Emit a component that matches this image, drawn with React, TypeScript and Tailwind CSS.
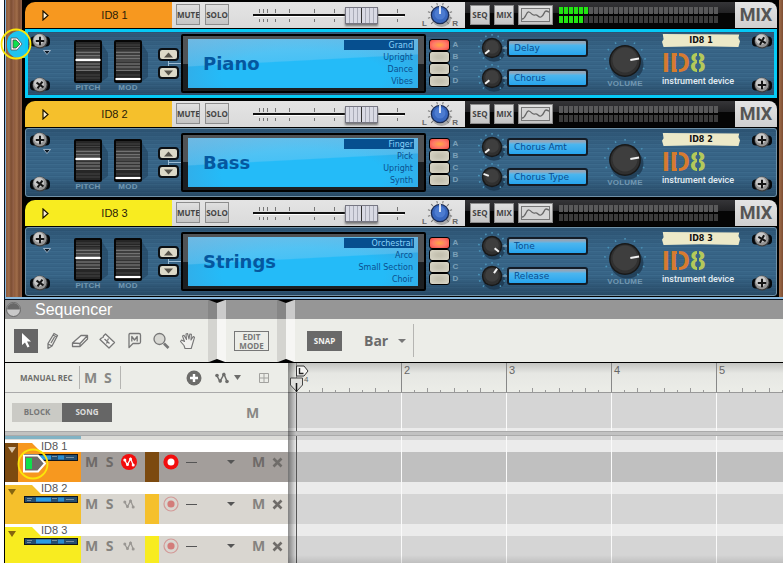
import { Fragment } from "react";

const units = [
  {
    name: "ID8 1",
    patch: "Piano",
    color: "bg-[#f7981f]",
    sounds: ["Grand", "Upright", "Dance", "Vibes"],
    params: [
      { name: "Delay", angle: -130 },
      { name: "Chorus", angle: -130 },
    ],
    level: [6, 5],
    selected: true,
  },
  {
    name: "ID8 2",
    patch: "Bass",
    color: "bg-[#f5c02c]",
    sounds: ["Finger", "Pick", "Upright", "Synth"],
    params: [
      { name: "Chorus Amt", angle: -130 },
      { name: "Chorus Type", angle: -70 },
    ],
    level: [0, 0],
    selected: false,
  },
  {
    name: "ID8 3",
    patch: "Strings",
    color: "bg-[#f8ec20]",
    sounds: ["Orchestral", "Arco", "Small Section", "Choir"],
    params: [
      { name: "Tone", angle: 130 },
      { name: "Release", angle: 35 },
    ],
    level: [0, 0],
    selected: false,
  },
];

const segments = Array.from({ length: 32 }, (_, i) => i);
const bars = [1, 2, 3, 4, 5];

function Ring({ size }: { size: number }) {
  return (
    <g fill="#4a93b8">
      {[-140, -112, -84, -56, -28, 0, 28, 56, 84, 112, 140].map((a) => (
        <rect key={a} x="-0.7" y={-size} width="1.5" height="1.7" transform={`rotate(${a})`} />
      ))}
    </g>
  );
}

function Knob({ label, angle, big }: { label: string; angle: number; big?: boolean }) {
  const r = big ? 15.5 : 9.8;
  return (
    <label className="relative block">
      <svg
        className={big ? "block size-11" : "block h-[30px] w-7 overflow-visible"}
        viewBox={big ? "-22 -22 44 44" : "-14 -15 28 30"}
      >
        <ellipse cx="2" cy="4" rx={r + 1} ry={r} fill="#152c40" opacity="0.6" />
        <Ring size={big ? 21 : 14} />
        {!big && <path d="M10.500 0H15" stroke="#9dbdd4" />}
        <circle r={r + 0.4} fill="#181818" />
        <circle r={r - 1} fill="#303030" />
        <circle cy="-1" r={r - 3} fill="#3e3e3e" />
        <path d={`M0 ${-r * 0.35}V${-r * 0.92}`} stroke="#f2f2f2" strokeWidth="2" transform={`rotate(${angle})`} />
      </svg>
      <input type="range" aria-label={label} className="absolute inset-0 w-full opacity-0" />
    </label>
  );
}

function Screw({ turn }: { turn: number }) {
  return (
    <svg className="block h-4 w-5" viewBox="-10 -8 20 16">
      <rect x="-10" y="-4.500" width="20" height="10" rx="4" fill="#05080b" />
      <circle r="7.600" fill="#3f3f3f" />
      <circle cx="-0.3" cy="-0.5" r="6.800" fill="#959595" />
      <circle cx="-1" cy="-1.500" r="5" fill="#c9c9c9" />
      <path d="M-4.200 0H4.200M0-4.200V4.200" stroke="#151515" strokeWidth="2" transform={`rotate(${turn})`} />
    </svg>
  );
}

function Wheel({ label, mark }: { label: string; mark: number }) {
  return (
    <label className="relative flex w-7 flex-col items-center">
      <svg className="block h-[43px] w-7 overflow-visible" viewBox="0 0 28 43">
        <path d="M27 2l7 11v24l-7 5z" fill="#1b3a54" opacity="0.5" />
        <rect width="28" height="43" rx="2" fill="#060606" />
        <rect x="2" y="2" width="24" height="39" fill="#262626" />
        <path d="M2 5h24M2 7.500h24M2 10h24M2 35h24M2 38h24" stroke="#444" />
        <rect x="2" y="11" width="24" height="20" fill="#484848" />
        <path d="M2 12.500h24M2 15.500h24M2 18.500h24M2 24h24M2 27h24M2 30.500h24" stroke="#727272" />
        <path d="M2 14h24M2 22.500h24M2 25.500h24M2 29h24" stroke="#333" />
        <path d={`M1.500 ${mark}h25`} stroke="#fff" strokeWidth="2" />
      </svg>
      <span className="mt-px text-[8px] leading-[8px] font-bold tracking-wide text-[#7298b2]">{label}</span>
      <input type="range" aria-label={label} className="absolute inset-0 w-full opacity-0" />
    </label>
  );
}

function PanKnob() {
  return (
    <label className="relative flex h-full w-9 items-start justify-center">
      <svg className="mt-px block h-[25px] w-7" viewBox="-14 -12 28 25">
        <g stroke="#777" strokeWidth="1">
          {[-135, -105, -75, -45, -15, 15, 45, 75, 105, 135].map((a) => (
            <path key={a} d="M0-10V-12.500" transform={`rotate(${a})`} />
          ))}
        </g>
        <ellipse cx="1.500" cy="3.500" rx="9.500" ry="8.500" fill="#777" opacity="0.5" />
        <circle r="9.300" fill="#1c2c52" />
        <circle r="8" fill="#3866bd" />
        <circle cy="-1" r="5.500" fill="#4c7bd0" />
        <path d="M0-9V-1" stroke="#fff" strokeWidth="1.600" />
      </svg>
      <span className="absolute bottom-0 left-0 text-[8px] leading-[8px] font-bold text-[#666]">L</span>
      <span className="absolute right-0 bottom-0 text-[8px] leading-[8px] font-bold text-[#666]">R</span>
      <input type="range" aria-label="Pan" className="absolute inset-0 w-full opacity-0" />
    </label>
  );
}

function MixStrip({ unit }: { unit: (typeof units)[number] }) {
  const small =
    "border border-[#8d8d8d] bg-linear-to-b from-[#e0e0e0] to-[#c4c4c4] font-['Open_Sans',sans-serif] text-[8px] leading-none font-bold text-[#444]";
  return (
    <div className="flex h-[26px] bg-black">
      <div className={`flex w-[147px] shrink-0 items-center rounded-tl-[10px] ${unit.color}`}>
        <svg className="ml-[17px] h-[11px] w-[7px]" viewBox="0 0 7 11">
          <path d="M1 1L6 5.500L1 10z" fill="#fff3d8" stroke="#1b1300" strokeWidth="1.200" />
        </svg>
        <span className="flex-1 pr-4 pl-6 text-center text-[11px] text-[#2b2108]">{unit.name}</span>
      </div>
      <div className="flex w-[293px] shrink-0 items-start bg-linear-to-b from-[#e4e4e4] to-[#dadada] pl-1">
        <button className={`mt-[2px] h-[21px] w-6 ${small}`}>MUTE</button>
        <button className={`mt-[2px] ml-[5px] h-[21px] w-6 ${small}`}>SOLO</button>
        <div className="relative ml-6 h-[26px] w-[152px]">
          <svg className="block h-[26px] w-[152px]" viewBox="0 0 152 26">
            <path d="M1 13.500h150" stroke="#fff" strokeWidth="3" />
            <path d="M0 13h152" stroke="#111" strokeWidth="2" />
            {[6, 10, 14, 22, 36, 61, 81, 144].map((x) => (
              <path key={x} d={`M${x + 0.5} 7v4M${x + 0.5} 17v3`} stroke="#777" />
            ))}
          </svg>
          <input
            type="range"
            aria-label="Level"
            defaultValue={77}
            className="absolute inset-0 m-0 h-[26px] w-full appearance-none bg-transparent [&::-webkit-slider-thumb]:h-[17px] [&::-webkit-slider-thumb]:w-[33px] [&::-webkit-slider-thumb]:appearance-none [&::-webkit-slider-thumb]:border [&::-webkit-slider-thumb]:border-[#777783] [&::-webkit-slider-thumb]:bg-[linear-gradient(90deg,transparent_15px,#333_15px,#333_16px,transparent_16px),repeating-linear-gradient(90deg,#d9dae4_0px,#d9dae4_3px,#aaacb8_3px,#aaacb8_4px)] [&::-webkit-slider-thumb]:shadow-[0_2px_2px_#777]"
          />
        </div>
        <div className="ml-[17px] h-full">
          <PanKnob />
        </div>
      </div>
      <div className="flex min-w-0 flex-1 items-start bg-[linear-gradient(180deg,#353538_0px,#222224_11px,#050505_11px)] pl-[5px]">
        <button className={`mt-[3px] h-5 w-5 ${small}`}>SEQ</button>
        <button className={`mt-[3px] ml-1 h-5 w-5 ${small}`}>MIX</button>
        <button aria-label="Show insert" className={`mt-[3px] ml-1 flex h-5 w-[35px] items-center justify-center ${small}`}>
          <svg className="h-[14px] w-[29px] shrink-0" viewBox="0 0 29 14">
            <rect x="0.5" y="0.5" width="28" height="13" fill="#d5d5d5" stroke="#777" />
            <path
              d="M1 11C5 11 5 3 8 4s3 4 6 3 3 3 6 2 3-6 5-6 2 1 3 1"
              fill="none"
              stroke="#666"
              strokeWidth="1.300"
            />
          </svg>
        </button>
        <div className="mt-[5px] ml-[6px] flex flex-col gap-[2px]">
          {unit.level.map((lit, row) => (
            <div key={row} className="flex gap-px">
              {segments.map((i) => (
                <i
                  key={i}
                  className={`h-[7px] w-1 ${i < lit ? "bg-[#22e612]" : row === 0 ? "bg-[#59595a]" : "bg-[#3b3b3b]"}`}
                />
              ))}
            </div>
          ))}
        </div>
      </div>
      <button className="flex h-[26px] w-[42px] shrink-0 items-center justify-center rounded-tr-[8px] bg-linear-to-b from-[#e4e4e4] to-[#cfcfcf] font-['Roboto',sans-serif] text-[18px] leading-none font-bold text-[#555]">
        MIX
      </button>
    </div>
  );
}

function Device({ unit }: { unit: (typeof units)[number] }) {
  return (
    <div
      className={`mt-px flex h-[69px] items-start bg-[linear-gradient(180deg,rgba(25,50,75,0.35),transparent_30%,transparent_70%,rgba(20,40,60,0.45)),repeating-linear-gradient(180deg,#3c6a8c_0px,#3c6a8c_1px,#376486_1px,#376486_3px,#346082_3px,#346082_4px)] ${
        unit.selected ? "shadow-[inset_0_0_0_3px_#06caf6]" : "rounded-[3px] shadow-[inset_0_0_0_1px_#7192a8]"
      }`}
    >
      <div className="ml-[5px] flex h-16 w-[21px] flex-col pt-1">
        <Screw turn={0} />
        <svg className="mt-px h-[5px] w-2 self-end" viewBox="0 0 8 5">
          <path d="M0.500 0.500h7L4 4.500z" fill="#0b1824" stroke="#bcd" strokeWidth="0.800" />
        </svg>
        <div className="mt-auto">
          <Screw turn={35} />
        </div>
      </div>
      <div className="mt-[11px] ml-[23px] flex gap-3">
        <Wheel label="PITCH" mark={20} />
        <Wheel label="MOD" mark={39} />
      </div>
      <div className="mt-[19px] ml-4 flex w-[23px] flex-col">
        <button
          aria-label="Previous patch"
          className="flex h-[13px] w-[21px] items-center justify-center rounded-[4px] border-2 border-[#0b0f13] bg-[#dcd9c8]"
        >
          <svg className="h-2 w-[13px] shrink-0" viewBox="0 0 13 8">
            <path d="M2 6.500L6.500 1.500L11 6.500z" fill="#56534a" />
          </svg>
        </button>
        <svg className="h-[5px] w-[23px]" viewBox="0 0 23 5">
          <path d="M10.500 0v5M10.500 2.500H23" stroke="#9dbdd4" fill="none" />
        </svg>
        <button
          aria-label="Next patch"
          className="flex h-[13px] w-[21px] items-center justify-center rounded-[4px] border-2 border-[#0b0f13] bg-[#dcd9c8]"
        >
          <svg className="h-2 w-[13px] shrink-0" viewBox="0 0 13 8">
            <path d="M2 1.500L6.500 6.500L11 1.500z" fill="#56534a" />
          </svg>
        </button>
      </div>
      <div className="mt-[5px] h-[59px] w-[245px] shrink-0 rounded-[2px] border-2 border-black bg-linear-to-b from-[#505356] from-50% to-[#1c1f22] to-50% pt-[3px] pr-[6px] pb-[3px] pl-[5px]">
        <div className="flex h-full items-center justify-between bg-[linear-gradient(177deg,rgba(150,205,235,0.55)_0%,rgba(140,205,240,0.35)_44%,transparent_46%),radial-gradient(ellipse_at_50%_75%,#24bbf8_50%,#3f9fd8)] pl-[15px]">
          <span className="font-['DejaVu_Sans',sans-serif] text-[18px] font-bold text-[#05579f]">{unit.patch}</span>
          <ul className="mr-1 w-[70px] self-start pt-px text-right font-['DejaVu_Sans',sans-serif] text-[8px] text-[#0b4f8f]">
            {unit.sounds.map((sound, i) => (
              <li
                key={sound}
                className={`h-3 pr-px leading-[11px] whitespace-nowrap ${i === 0 ? "border-b-2 border-transparent bg-[#064f8f] bg-clip-padding text-[#8bd3fa]" : ""}`}
              >
                {sound}
              </li>
            ))}
          </ul>
        </div>
      </div>
      <div className="mt-[10px] ml-[3px] grid grid-cols-[21px_7px] gap-x-[2px]">
        {["A", "B", "C", "D"].map((letter, i) => (
          <Fragment key={letter}>
            <button
              aria-label={`Sound ${letter}`}
              className={`h-3 w-[21px] rounded-[3px] border border-black ${i === 0 ? "bg-[radial-gradient(#ffa04a_10%,#ff7a6a_50%,#f4463c)]" : "bg-[radial-gradient(#c4c1b0_20%,#dad7c8)]"}`}
            />
            <span className="text-center text-[8px] leading-3 font-bold text-[#7ba0b8]">{letter}</span>
          </Fragment>
        ))}
      </div>
      <div className="mt-1 ml-[19px] flex flex-col">
        {unit.params.map((param) => (
          <div key={param.name} className="flex h-[30px] items-center gap-px">
            <Knob label={param.name} angle={param.angle} />
            <div className="h-[18px] w-[81px] rounded-[3px] border-2 border-[#141c26] bg-linear-to-b from-[#8fa6ba] from-12% via-[#4cb6ee] via-30% to-[#25a5ee] pl-[5px] font-['DejaVu_Sans',sans-serif] text-[9px] leading-[14px] whitespace-nowrap text-[#084d90]">
              {param.name}
            </div>
          </div>
        ))}
      </div>
      <div className="mt-[10px] ml-[15px] flex flex-col items-center">
        <Knob label="Volume" angle={80} big />
        <span className="-mt-[3px] text-[8px] leading-[8px] font-bold tracking-wide text-[#7298b2]">VOLUME</span>
      </div>
      <div className="mt-[5px] ml-[15px] w-[78px]">
        <div className="h-[13px] bg-[#ece9c8] text-center font-['DejaVu_Sans',sans-serif] text-[8px] leading-[13px] font-bold text-[#111] [clip-path:polygon(1%_0,99%_4%,98%_30%,100%_55%,98%_100%,50%_94%,2%_100%,0_60%,2%_40%)]">
          {unit.name}
        </div>
        <div className="relative mt-1 w-max font-['Liberation_Sans',sans-serif] text-[28px] leading-[23px] font-bold text-[#d67b30]">
          ID<span className="text-[#b4c95a]">8</span>
          <span className="absolute top-0 right-[7px] h-full w-[2px] bg-[#376486]" />
          <span className="absolute top-0 left-[15px] h-full w-[2px] bg-[#376486]" />
        </div>
        <div className="mt-[2px] font-['Roboto',sans-serif] text-[9px] leading-[10px] font-medium whitespace-nowrap text-[#e4edf3]">
          instrument device
        </div>
      </div>
      <div className="mr-[5px] ml-auto flex h-16 flex-col justify-between pt-1">
        <Screw turn={unit.name === "ID8 2" ? 0 : 30} />
        <Screw turn={0} />
      </div>
    </div>
  );
}

function Pin({ className }: { className: string }) {
  return (
    <svg className={className} viewBox="0 0 32 32">
      <circle cx="16" cy="16" r="14.500" fill="none" stroke="#fbe50a" strokeWidth="1.800" />
    </svg>
  );
}

function Fold() {
  return (
    <div className="relative flex h-full w-[18px]">
      <div className="w-[9px] bg-black/10" />
      <div className="w-[9px] bg-white/50" />
      <svg className="absolute top-0 left-0 h-[3px] w-[18px]" viewBox="0 0 18 3">
        <path d="M1 0h16L9 3z" />
      </svg>
      <svg className="absolute bottom-0 left-0 h-[3px] w-[18px]" viewBox="0 0 18 3">
        <path d="M1 3h16L9 0z" />
      </svg>
    </div>
  );
}

const tools = [
  {
    name: "Pencil",
    art: <path d="M7 19.500l0-5L13 4.500l3.500 2L11 17zM7 15l4 2M12 6l3.500 2M10 14l3.500-6" />,
  },
  { name: "Eraser", art: <path d="M4.500 14L13 6.500l6.500 0-7.500 8zM4.500 14v3.500h7.500v-3M12 17.500l7.500-7.500V6.500" fill="#f5f5f2" /> },
  {
    name: "Razor",
    art: <path d="M10.500 5L19.500 13.500l-5.500 5.500L5 10.500l1.500-1.500 1.500-.5.500-1.500zM9.500 10l5 4.500M13.500 9.500l-1 2M11.500 14.500l1-2" fill="#f5f5f2" />,
  },
  {
    name: "Mute",
    art: (
      <>
        <path d="M8 4.500h9q1.500 0 1.500 1.500v7q0 1.500-1.500 1.500h-6l-4 4V6q0-1.500 1-1.500z" />
        <path d="M9.800 12.500V7.500l2.700 3.500 2.700-3.500v5" />
      </>
    ),
  },
  {
    name: "Magnify",
    art: (
      <>
        <circle cx="10.500" cy="10" r="5.500" fill="#d8d8d3" />
        <path d="M15 14.500l4.500 4.500" strokeWidth="2.600" />
      </>
    ),
  },
  {
    name: "Hand",
    art: (
      <path
        d="M9 19.500l-1-3-3.500-4 1-1.500 3 1.500-2-5.500 1.500-.8 2.500 4.300-.500-5.500 1.500-.5 1.500 5.500.8-5 1.600.3-.4 5.700 2.200-3.500 1.300.8-1.800 6.200-1.500 5z"
        fill="#f1f1ee"
        strokeWidth="1.100"
      />
    ),
  },
];

function Automation({ className, color }: { className: string; color: string }) {
  return (
    <svg className={className} viewBox="0 0 14 12" fill={color} stroke={color} strokeWidth="1.500">
      <path d="M1.500 3L5 9.500L9 2L12 9.500" fill="none" />
      <g stroke="none">
        <circle cx="2" cy="3.500" r="1.800" />
        <circle cx="5.200" cy="9" r="1.800" />
        <circle cx="8.800" cy="2.500" r="1.800" />
        <circle cx="12" cy="9.500" r="1.800" />
      </g>
    </svg>
  );
}

function Down({ className }: { className: string }) {
  return (
    <svg className={className} viewBox="0 0 8 5" preserveAspectRatio="none">
      <path d="M0 0h8L4 5z" fill="currentColor" />
    </svg>
  );
}

function TrackRow({ unit }: { unit: (typeof units)[number] }) {
  const on = unit.selected;
  const letter = `font-['Open_Sans',sans-serif] text-[14px] leading-none font-bold ${on ? "text-[#6e6a68]" : "text-[#85837f]"}`;
  return (
    <div className="relative flex h-[42px] shrink-0 items-end bg-white">
      <div
        className={`relative h-[39px] w-[76px] shrink-0 [clip-path:polygon(0_0,27px_0,36px_9px,100%_9px,100%_100%,0_100%)] ${unit.color}`}
      >
        <div className={`h-full w-[13px] pt-1 pl-[3px] ${on ? "bg-[#7c4a10] text-[#d9c5a8]" : "text-[#86660f]"}`}>
          <Down className="h-[6px] w-2" />
        </div>
        <svg className="absolute top-[11px] left-[19px] h-[7px] w-[54px]" viewBox="0 0 54 7">
          <rect width="54" height="7" fill="#10151c" />
          <rect x="1" y="1" width="52" height="5" fill="#254e70" />
          <path d="M3 2.500h5M3 4.500h4M28 2.500h5M35 4.500h4M42 3.500h8" stroke="#7990a0" />
          <rect x="12" y="1.500" width="15" height="4" fill="#2a9ce5" />
          <rect x="34" y="1.500" width="6" height="4" fill="#2a8ccd" />
        </svg>
      </div>
      <span className="absolute top-0 left-9 text-[11px] leading-3 text-[#555]">{unit.name}</span>
      <div className={`flex h-[30px] min-w-0 flex-1 items-center pb-[10px] pl-1 ${on ? "bg-[#a39e9b]" : "bg-[#d9d6d0]"}`}>
        <button className={`w-3 ${letter}`}>M</button>
        <button className={`ml-2 w-[9px] ${letter}`}>S</button>
        <button
          aria-label="Automation"
          className={`ml-[7px] flex size-4 items-center justify-center rounded-full ${on ? "bg-[#f20d0d]" : ""}`}
        >
          <Automation className="h-[10px] w-3" color={on ? "#fff" : "#9a9793"} />
        </button>
        <div className={`-mb-[10px] ml-2 h-[30px] w-[14px] ${on ? "bg-[#7c4a10]" : unit.color}`} />
        <button aria-label="Record" className="ml-1 size-4">
          <svg className="size-4" viewBox="-8 -8 16 16">
            {on ? (
              <>
                <circle r="7.600" fill="#f20d0d" />
                <circle r="3.500" fill="#fff" />
              </>
            ) : (
              <>
                <circle r="7" fill="none" stroke="#d39a98" strokeWidth="1.200" />
                <circle r="3.600" fill="#d37c7a" />
              </>
            )}
          </svg>
        </button>
        <div className="ml-[7px] h-px w-[11px] bg-[#555]" />
        <Down className="ml-[30px] h-1 w-2 text-[#555]" />
        <button className={`ml-[17px] w-[13px] ${letter}`}>M</button>
        <button aria-label="Delete lane" className="ml-[7px] size-[11px] text-[#6f6c69]">
          <svg className="size-[11px]" viewBox="0 0 11 11">
            <path d="M1.500 1.500l8 8M9.500 1.500l-8 8" stroke="currentColor" strokeWidth="2.600" />
          </svg>
        </button>
      </div>
    </div>
  );
}

export default function App() {
  const label = "font-['Open_Sans',sans-serif] text-[8px] font-bold";
  return (
    <main className="flex h-screen flex-col overflow-hidden bg-white pl-1 font-['Liberation_Sans',sans-serif]">
      <section className="relative flex shrink-0 border-b border-l border-[#0c1522] bg-black">
        <div className="w-[19px] shrink-0 border-r-2 border-l border-r-black border-l-[#8ab9de] bg-[repeating-linear-gradient(90deg,#8d5b3c_0px,#a06d4a_3px,#7d4e33_5px,#96644a_8px)]" />
        <div className="flex min-w-0 flex-1 flex-col gap-[3px] border-r-2 border-black pt-[2px] pb-[3px] pl-px">
          {units.map((unit) => (
            <div key={unit.name}>
              <MixStrip unit={unit} />
              <Device unit={unit} />
            </div>
          ))}
        </div>
        <div className="w-1 shrink-0 bg-[linear-gradient(90deg,#a06d4a,#7d4e33)]" />
        <div className="absolute inset-x-0 bottom-0 h-[2px] bg-[#8ab9de]" />
        <div className="absolute top-[31px] left-[2px] h-[27px] w-[18px] rounded-l-[12px] bg-[#1fc3ee]" />
        <svg className="absolute top-[37px] left-[5px] h-[14px] w-[14px]" viewBox="0 0 14 14">
          <path d="M1 1h6l5 6-5 6H1z" fill="#fff" stroke="#555" strokeWidth="0.800" />
          <path d="M3 3h3l4 4-4 4H3z" fill="#0fe04c" stroke="#444" strokeWidth="0.800" />
        </svg>
        <Pin className="absolute top-7 -left-[5px] size-8" />
      </section>

      <section className="relative flex min-h-0 flex-1 flex-col border-l border-black bg-[#ecede8]">
        <header className="flex h-[19px] shrink-0 items-center bg-[#969696]">
          <svg className="ml-px size-[15px]" viewBox="0 0 15 15">
            <circle cx="7.500" cy="7.500" r="7" fill="#c9c9c9" stroke="#666" />
            <path d="M1 7.500a6.500 6.500 0 0 1 13 0z" fill="#686868" />
          </svg>
          <h1 className="ml-[14px] text-[16px] leading-none text-white">Sequencer</h1>
        </header>
        <div className="absolute top-0 left-[203px] h-[62px]">
          <Fold />
        </div>
        <div className="absolute top-0 left-[272px] h-[62px]">
          <Fold />
        </div>
        <div className="flex h-11 shrink-0 items-center border-b border-black pl-[9px]">
          <button aria-label="Select" className="flex size-6 items-center justify-center bg-[#666]">
            <svg className="h-4 w-3" viewBox="0 0 12 16">
              <path d="M2 0v12l3-2.500 2.500 5 2-1-2.500-5H11z" fill="#fff" />
            </svg>
          </button>
          <div className="ml-[3px] flex gap-[3px]">
            {tools.map((tool) => (
              <button key={tool.name} aria-label={tool.name}>
                <svg className="size-6" viewBox="0 0 24 24" fill="none" stroke="#777" strokeWidth="1.300" strokeLinejoin="round">
                  {tool.art}
                </svg>
              </button>
            ))}
          </div>
          <button className={`ml-[34px] h-5 w-[35px] border border-[#777] leading-[9px] text-[#777] ${label}`}>
            EDIT MODE
          </button>
          <button className={`ml-[38px] h-5 w-[35px] bg-[#696969] text-[#f3f3f0] ${label}`}>SNAP</button>
          <div className="relative ml-[22px] flex h-[33px] w-[50px] items-center border-r border-[#b5b5b2]">
            <select
              aria-label="Snap value"
              className="w-full appearance-none bg-transparent font-['Open_Sans',sans-serif] text-[14px] font-bold text-[#6b6b6b]"
            >
              <option>Bar</option>
            </select>
            <Down className="pointer-events-none absolute right-[7px] h-1 w-2 text-[#777]" />
          </div>
        </div>

        <div className="flex min-h-0 flex-1">
          <div className="flex w-[283px] shrink-0 flex-col">
            <div className="flex h-[30px] shrink-0 items-center border-b border-[#aaa] pl-[15px] text-[#888885]">
              <button className={`w-[48px] text-left whitespace-nowrap text-[#6e6e6c] ${label}`}>MANUAL REC</button>
              <div className="ml-[11px] flex h-[23px] w-[42px] items-center gap-2 border-x border-[#b5b5b2] pl-1 font-['Open_Sans',sans-serif] text-[14px] font-bold">
                <button className="w-3">M</button>
                <button>S</button>
              </div>
              <button aria-label="Add lane" className="ml-[65px] size-4">
                <svg className="size-4" viewBox="0 0 16 16">
                  <circle cx="8" cy="8" r="7.500" fill="#6c6c6a" />
                  <path d="M8 4v8M4 8h8" stroke="#fff" strokeWidth="2.400" />
                </svg>
              </button>
              <Automation className="ml-[13px] h-3 w-[14px]" color="#6c6c6a" />
              <Down className="ml-[5px] h-[5px] w-[7px] text-[#6c6c6a]" />
              <svg className="ml-[18px] size-[10px]" viewBox="0 0 10 10" fill="none" stroke="#a2a29f">
                <path d="M.5.5h9v9h-9zM5 .5v9M.5 5h9" />
              </svg>
            </div>
            <div className="flex h-[38px] shrink-0 items-center pl-[7px]">
              <button className={`h-[19px] w-[50px] bg-[#cacac5] text-[#777] ${label}`}>BLOCK</button>
              <button className={`h-[19px] w-[50px] bg-[#666] text-[#ddd] ${label}`}>SONG</button>
              <button className="ml-[134px] font-['Open_Sans',sans-serif] text-[14px] font-bold text-[#888885]">M</button>
            </div>
            <div className="h-[5px] shrink-0 border-y border-[#aaa] bg-[#c2c2c0]" />
            <div className="h-1 shrink-0 bg-[#dcdcd8]">
              <div className="h-[3px] w-[76px] bg-[#82b3c4]" />
            </div>
            {units.map((unit) => (
              <TrackRow key={unit.name} unit={unit} />
            ))}
          </div>

          <div className="relative flex min-w-0 flex-1 flex-col overflow-hidden bg-[#d5d5d5]">
            <div className="h-[30px] shrink-0 border-b border-[#999] bg-linear-to-b from-[#c3c4c1] via-[#e6e7e3] via-35% to-[#ecede8]" />
            <div className="h-[35px] shrink-0" />
            <div className="h-[3px] shrink-0 bg-[#ebebeb]" />
            <div className="h-[9px] shrink-0" />
            {units.map((unit) => (
              <div
                key={unit.name}
                className={`h-[42px] shrink-0 border-t-[12px] border-[#ebebeb] ${unit.selected ? "bg-[#c0c0c0]" : ""}`}
              />
            ))}
            <div className="absolute inset-y-0 left-2 flex">
              {bars.map((bar) => (
                <div key={bar} className="flex w-[105px] shrink-0 flex-col">
                  <div className="relative h-[29px] border-l border-[#888] pl-[2px] text-[11px] leading-[14px] text-[#666]">
                    {bar > 1 && bar}
                    <svg className="absolute bottom-0 left-0 h-1 w-[105px]" viewBox="0 0 105 4">
                      {[1, 2, 3, 4, 5, 6, 7].map((n) => (
                        <path key={n} d={`M${Math.round(n * 13.15) - 0.5} 4v${n % 2 ? -2 : -4}`} stroke="#999" />
                      ))}
                    </svg>
                  </div>
                  <div className={`mt-px flex-1 border-l ${bar === 1 ? "border-[#555]" : "border-[#fafafa]"}`} />
                </div>
              ))}
            </div>
            <div className="absolute inset-x-0 top-[68px] h-[5px] border-y border-[#aaa] bg-[#c2c2c2]" />
            <div className="absolute inset-y-0 left-0 w-2 bg-linear-to-r from-black/40 to-transparent" />
            <div className="absolute inset-x-0 bottom-0 h-2 bg-linear-to-t from-black/10 to-transparent" />
            <svg className="absolute top-[2px] left-[1px] h-7 w-6" viewBox="0 0 24 28">
              <path d="M7.500 1h7.500l4 5-4 5h-7.500z" fill="#f4f4f2" stroke="#333" />
              <path d="M10.500 3v5.500h4" fill="none" stroke="#222" strokeWidth="1.400" />
              <path d="M1.500 13h12v7l-6 6.500-6-6.500z" fill="#e0e0dd" stroke="#444" />
              <path d="M7.500 18v9" stroke="#111" strokeWidth="1.500" />
            </svg>
            <span className="absolute top-[13px] left-4 text-[8px] leading-none text-[#666]">4</span>
          </div>
        </div>
        <svg className="absolute top-[154px] left-[18px] h-[19px] w-6" viewBox="0 0 24 19">
          <path d="M1 1.500h14l7 8-7 8H1z" fill="#6d6a67" stroke="#fff" strokeWidth="2" />
          <rect x="3" y="4" width="6" height="11" fill="#0fe04c" />
        </svg>
        <Pin className="absolute top-[148px] left-3 size-8" />
      </section>
    </main>
  );
}
